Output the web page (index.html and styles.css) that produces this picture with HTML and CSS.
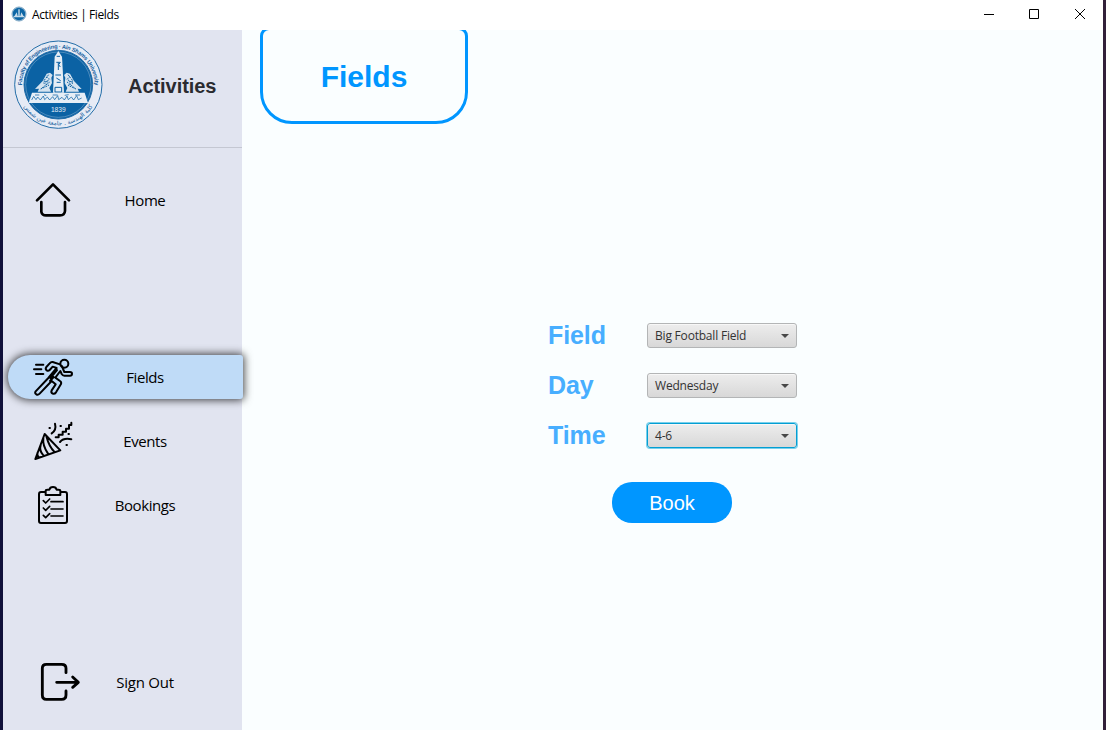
FILE: index.html
```html
<!DOCTYPE html>
<html lang="en">
<head>
<meta charset="utf-8">
<title>Activities | Fields</title>
<link rel="stylesheet" href="styles.css">
</head>
<body>
<div class="window">
  <header class="titlebar">
    <svg class="app-icon" viewBox="0 0 16 16"><circle cx="8" cy="8" r="7" fill="#a9c6db" stroke="#7ba5c4"/><circle cx="8" cy="8" r="6.200" fill="#0d66a5"/><path d="M7.3 10V3.7L8 2.7l.7 1V10zM3.500 10l2.200-3.800 1 3.800zM12.500 10l-2.200-3.800-1 3.800zM3 10h10v1.300H3z" fill="#c5dbea"/></svg>
    <span class="caption">Activities | Fields</span>
    <div class="controls">
      <svg viewBox="0 0 46 30"><path d="M11 14.500h10" /></svg>
      <svg viewBox="0 0 46 30"><path d="M10.500 9.500h9v9h-9z"/></svg>
      <svg viewBox="0 0 46 30"><path d="M10 9l10 10M20 9l-10 10"/></svg>
    </div>
  </header>
  <div class="body">
    <aside class="sidebar">
      <div class="brand">
        <svg class="seal" viewBox="42 31 267 267">
          <defs>
            <path id="arc-top" d="M66 165a109 109 0 0 1 218 0"/>
            <path id="arc-bottom" d="M53 165a122 122 0 0 0 244 0"/>
          </defs>
          <circle cx="175" cy="165" r="131" fill="#e6ebf5" stroke="#236da8" stroke-width="3"/>
          <circle cx="175" cy="165" r="103" fill="#0b62a4" stroke="#236da8" stroke-width="3"/>
          <circle cx="175" cy="165" r="98" fill="none" stroke="#8fb5d5" stroke-width="1.500"/>
          <text class="seal-en"><textPath href="#arc-top" startOffset="50%" text-anchor="middle">Faculty of Engineering · Ain Shams University</textPath></text>
          <text class="seal-ar"><textPath href="#arc-bottom" startOffset="50%" text-anchor="middle">كلية الهندسة . جامعة عين شمس</textPath></text>
          <path d="M164 81l11-17 11 17 6 108h-33z" fill="#e6eef6"/>
          <path d="M170 80h10M169 98h12l-5 7 5 7M175 99v22M166 136h17M169 145l13 8M170 158h12M165 173h20v14h-20z" fill="none" stroke="#0b62a4" stroke-width="3"/>
          <path d="M140 132l10-3 8 7-4 8 2 16-8 15 5 11h-40l4-9-12 1 23-24z" fill="#d5e3ef"/>
          <path d="M210 132l-10-3-8 7 4 8-2 16 8 15-5 11h40l-4-9 12 1-23-24z" fill="#d5e3ef"/>
          <path d="M140 140l9 9-18 11 15 7-24 11M146 135l-15 19 17 4-22 17M210 140l-9 9 18 11-15 7 24 11M204 135l15 19-17 4 22 17" fill="none" stroke="#0b62a4" stroke-width="3" stroke-dasharray="5 3"/>
          <path d="M96 189h158l10 31H86z" fill="#e6eef6"/>
          <path d="M95 211l6-11 7 10 5-8 8 9 9-12 4 11 8-8 7 9 9-10 6 9 9-12 3 12 10-7 7 8 8-12 4 11 9-8 7 9 9-13 5 12 10-5M105 196h13M132 195l7 3M158 196h15M194 197l12-2M225 196h15" fill="none" stroke="#0b62a4" stroke-width="2.200"/>
          <text class="seal-year" x="175" y="247" text-anchor="middle">1839</text>
        </svg>
        <h1 class="brand-name">Activities</h1>
      </div>
      <nav class="nav">
        <a class="item home">
          <svg viewBox="0 27 210 132"><path d="M51 91L99 43l48 48M64 96v29q2 11 14 11h42q14 0 15-13V96"/></svg>
          <span>Home</span>
        </a>
        <a class="item fields active">
          <svg viewBox="61 45 210 132"><g class="thin"><circle cx="194" cy="71" r="12"/><path d="M109 74h22M103 88h22M109 102h22M181 73l-22-7q-5-1-9 4l-10 11q-4 6 1 10 5 3 9-1l9-10 12 4-25 30-38 40q-4 6 2 9 5 3 10-2l36-38 12 10-12 18q-3 7 3 10 6 2 10-4l15-25q2-6-3-9l-14-10 15-20 4 9q3 5 8 5h17q6 0 6-6 0-5-6-5h-17l-8-19M152 114l20-24M162 111l-11 12"/></g></svg>
          <span>Fields</span>
        </a>
        <a class="item">
          <svg viewBox="1 27 210 132"><g class="thin"><path d="M75 72L47 147l75-26zM71 84q-3 22 14 47M80 79q9 33 24 46M63 105q-5 17 8 31M54 127q-4 8 5 16"/><path d="M96 70q15-10 10-29M121 96q11-13 34-8"/><path d="M108 82h9v-8h12v-9h10v-9h9V45h7v-7"/></g><path class="dots" d="M90 54h.1M123 48h.1M147 72h.1M141 105h.1"/></svg>
          <span>Events</span>
        </a>
        <a class="item">
          <svg viewBox="0 24 210 132"><path d="M77 51H63q-6 0-6 7v80q0 6 6 6h72q6 0 6-6V58q0-7-6-7h-14M77 60V48q0-4 5-4h6q2-8 11-8t11 8h6q5 0 5 4v12z" stroke-width="6"/><path d="M93 80h36M93 102h36M93 123h36M70 77l7 7 12-12M70 99l7 7 12-12M70 121l7 7 12-12" stroke-width="5"/></svg>
          <span>Bookings</span>
        </a>
        <a class="item signout">
          <svg viewBox="1 33 210 132"><path d="M139 68V55q0-12-13-12H80Q68 43 68 55v80q0 13 12 13h46q13 0 13-13v-12M111 97h64M159 81l17 16-17 15" stroke-width="8.500"/></svg>
          <span>Sign Out</span>
        </a>
      </nav>
    </aside>
    <main class="main">
      <div class="tab">Fields</div>
      <form class="form">
        <div class="grid">
          <label>Field</label><div class="combo">Big Football Field</div>
          <label>Day</label><div class="combo">Wednesday</div>
          <label>Time</label><div class="combo focused">4-6</div>
        </div>
        <button class="book" type="button">Book</button>
      </form>
    </main>
  </div>
</div>
</body>
</html>
```
FILE: styles.css
```css
* { box-sizing: border-box; }
body { margin: 0; width: 1106px; height: 730px; overflow: hidden; background: #fff; font-family: "Open Sans", "Noto Sans", sans-serif; }
.window { height: 730px; display: flex; flex-direction: column; overflow: hidden; border-left: 3px solid #10103a; border-right: 3px solid #32203a; }
.titlebar { height: 30px; flex: none; display: flex; align-items: center; background: #fff; }
.app-icon { width: 16px; height: 16px; margin: -2px 0 0 8px; }
.caption { margin: 0 0 0 5px; font-size: 12px; letter-spacing: -0.4px; line-height: 20px; color: #000; }
.controls { margin: 0 -8px 0 auto; display: flex; }
.controls svg { width: 46px; height: 30px; flex: none; fill: none; stroke: #000; stroke-width: 1; }
.body { flex: 1; display: flex; min-height: 0; }
.sidebar { width: 239px; flex: none; background: #e1e4f0; position: relative; z-index: 1; }
.brand { height: 118px; display: flex; align-items: flex-start; padding: 10px 0 0 11px; border-bottom: 1px solid #c4c7d2; }
.seal { width: 89px; height: 89px; flex: none; }
.seal-en { font: bold 17px "Liberation Sans", sans-serif; letter-spacing: -0.6px; fill: #16619f; }
.seal-ar { font: 18px "DejaVu Sans", sans-serif; fill: #16619f; }
.seal-year { font: 20px "Liberation Sans", sans-serif; fill: #e6eef6; }
.brand-name { margin: 34px 0 0 25px; font: bold 20px/24px "Liberation Sans", Arial, sans-serif; letter-spacing: -0.05px; color: #2b2b30; }
.nav { display: flex; flex-direction: column; padding: 31px 0 0 5px; }
.item { width: 235px; height: 44px; display: flex; align-items: center; flex: none; margin-bottom: 20px; color: #000; }
.item svg { width: 70px; height: 44px; margin-left: 12px; flex: none; fill: none; stroke: #000; stroke-width: 8; stroke-linecap: round; stroke-linejoin: round; }
.item .thin { stroke-width: 6; }
.item .dots { stroke-width: 6; stroke-linecap: square; }
.item span { width: 110px; margin: -1px 0 0 0; text-align: center; font-size: 15px; letter-spacing: -0.4px; line-height: 22px; white-space: nowrap; }
.item.home span, .item.signout span { margin-top: -3px; }
.item.signout span { letter-spacing: -0.25px; }
.item.fields { margin-top: 112px; }
.item.active { background: #bfdbf7; border-radius: 22px 3px 3px 22px; box-shadow: 0 0 9px 1px rgba(0, 0, 0, 0.75); }
.item.signout { margin-top: 114px; }
.main { flex: 1; background: #fafeff; overflow: hidden; }
.tab { width: 208px; height: 97px; margin: -3px 0 0 18px; padding-top: 2px; border: 3px solid #0096ff; border-radius: 9px 9px 32px 32px; display: flex; align-items: center; justify-content: center; font: bold 30px "Liberation Sans", Arial, sans-serif; color: #0096ff; }
.form { margin: 199px 0 0 305px; width: 250px; }
.grid { display: grid; grid-template-columns: 100px 150px; grid-auto-rows: 25px; row-gap: 25px; align-items: center; }
.grid label { padding-left: 1px; font: bold 25px/25px "Liberation Sans", Arial, sans-serif; letter-spacing: -0.1px; color: #47aeff; }
.combo { height: 25px; display: flex; align-items: center; justify-content: space-between; padding: 0 7px; border: 1px solid #b3b5b6; border-radius: 3px; background: linear-gradient(#ededed, #d8d8d8); box-shadow: inset 0 1px #f7f7f7; font-size: 12px; letter-spacing: -0.2px; color: #333; }
.combo::after { content: ""; border: 4px solid transparent; border-top-color: #484848; border-bottom: 0; }
.combo.focused { border-color: #039ed3; box-shadow: 0 0 0 1px #79d0eb, inset 0 1px #f7f7f7; }
.book { display: block; width: 120px; height: 41px; margin: 34px 0 0 65px; padding: 1px 0 0; border: 0; border-radius: 20px; background: #0096ff; color: #fff; font: 20px "Liberation Sans", Arial, sans-serif; }
```
